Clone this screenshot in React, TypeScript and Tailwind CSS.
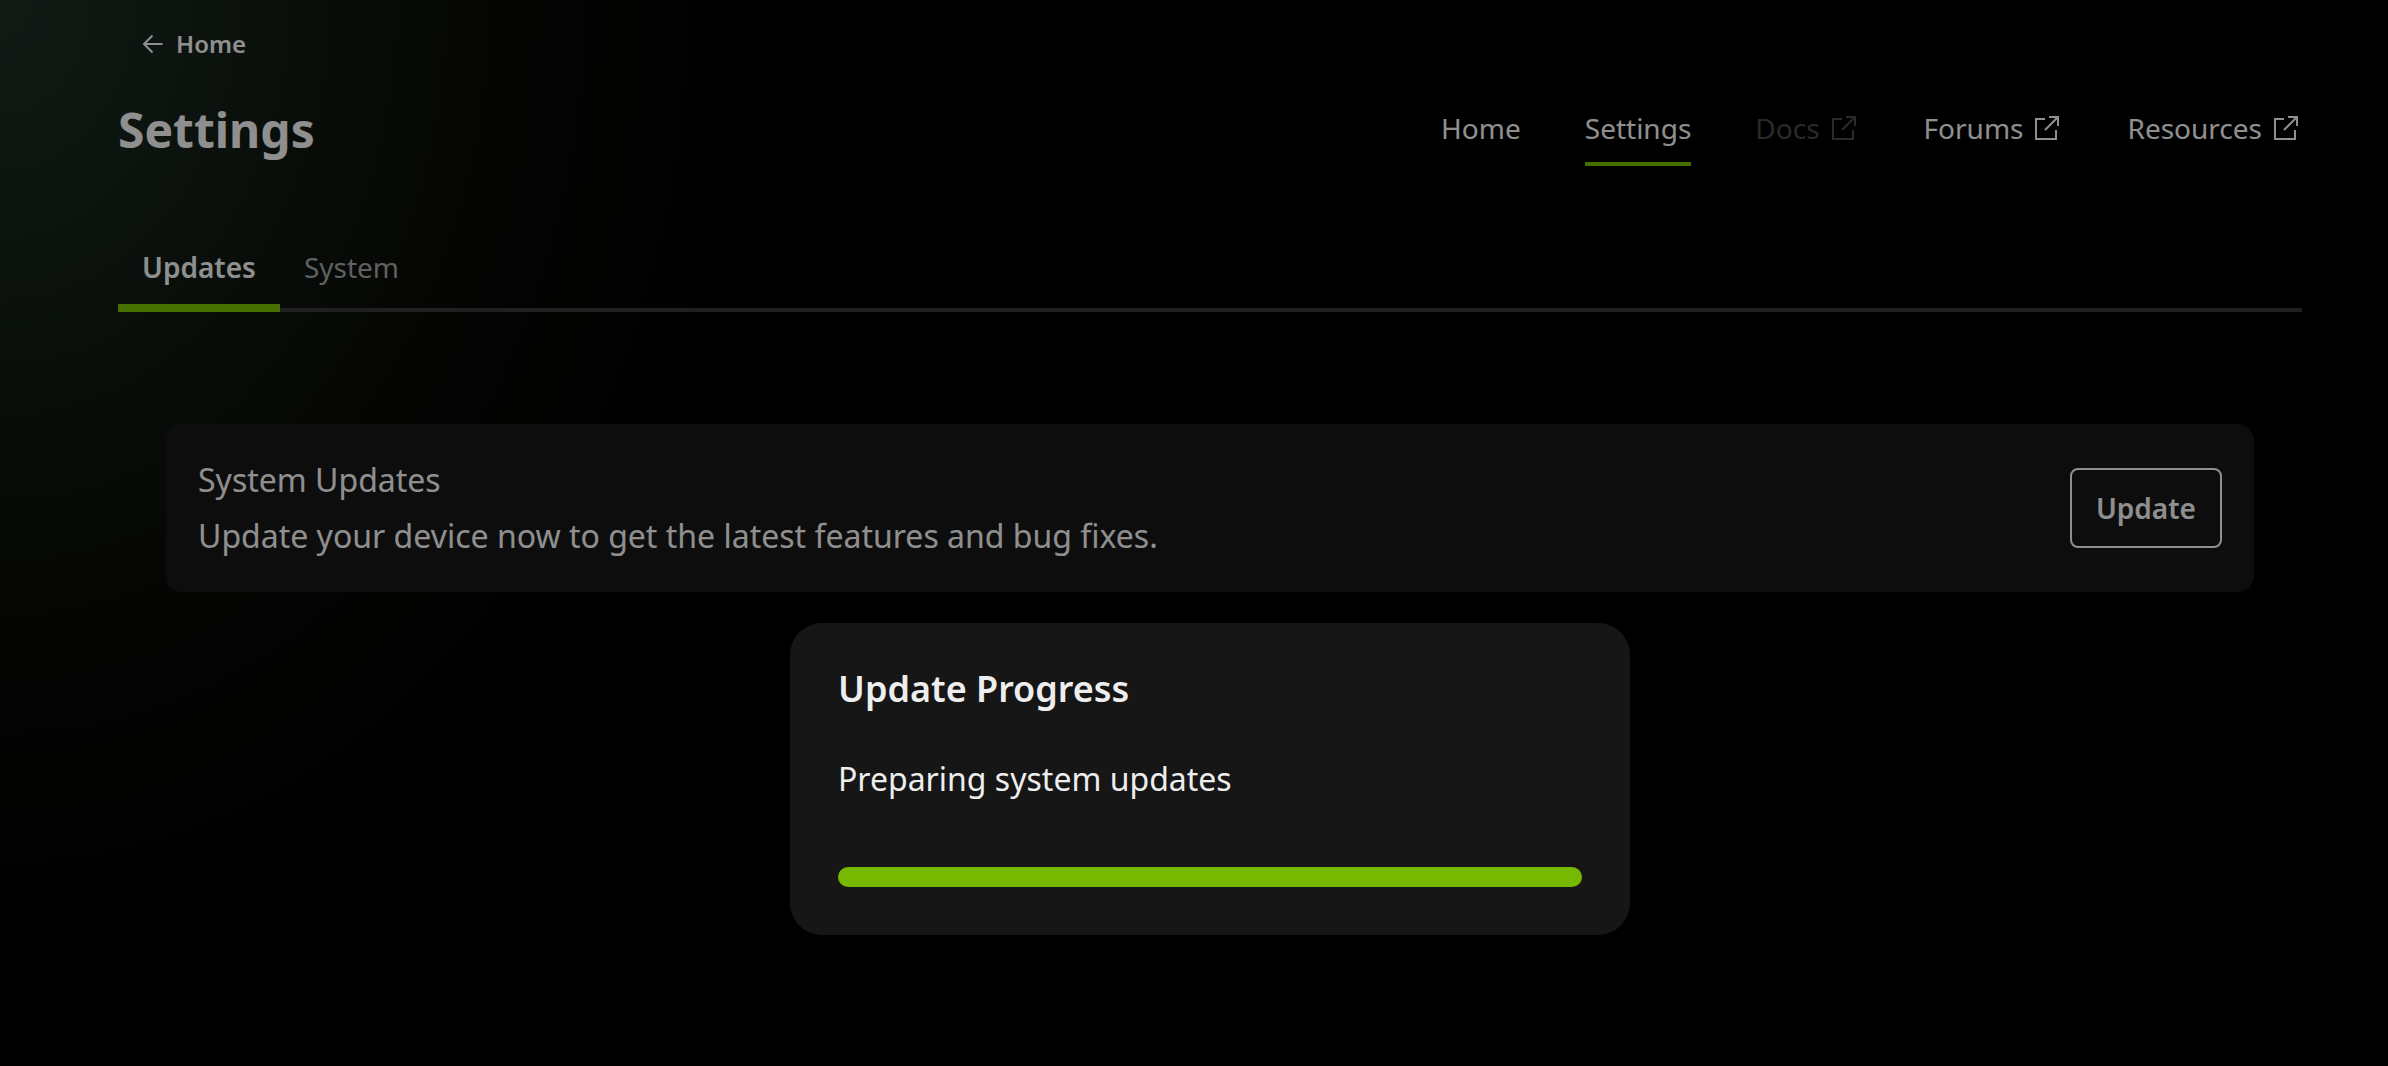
import { useState } from "react"

type NavItem = {
  label: string
  external?: boolean
  disabled?: boolean
}

const navItems: NavItem[] = [
  { label: "Home" },
  { label: "Settings" },
  { label: "Docs", external: true, disabled: true },
  { label: "Forums", external: true },
  { label: "Resources", external: true }
]

const tabs = ["Updates", "System"]

function ArrowLeftIcon() {
  return (
    <svg className="h-6 w-6" viewBox="0 0 24 24" fill="none" stroke="currentColor" strokeWidth={2} aria-hidden="true">
      <path d="M20.5 12H2M10.5 3.5L2 12l8.5 8.5" />
    </svg>
  )
}

function ExternalIcon() {
  return (
    <svg className="h-8 w-8" viewBox="0 0 32 32" fill="none" stroke="currentColor" strokeWidth={2} aria-hidden="true">
      <path d="M14 7H5v20h20v-9" />
      <path d="M18 5h9v9M14 18L27 5" />
    </svg>
  )
}

function NavLink({ item, active }: { item: NavItem; active: boolean }) {
  return (
    <a
      href="#"
      aria-current={active ? "page" : undefined}
      aria-disabled={item.disabled}
      className={`flex h-[76px] items-center gap-2 border-y-4 border-t-transparent text-[28px] leading-8 ${
        active ? "border-b-[#76b900]" : "border-b-transparent"
      } ${item.disabled ? "text-[#464646]" : "text-[#eeeeee]"}`}
    >
      {item.label}
      {item.external && <ExternalIcon />}
    </a>
  )
}

function UpdateDialog() {
  return (
    <div className="absolute inset-0 flex items-start justify-center bg-black/40 pt-[623px] pr-[86px] pl-[118px]">
      <div
        role="dialog"
        aria-modal="true"
        aria-labelledby="update-title"
        className="w-full max-w-[840px] rounded-[32px] bg-[#161616] p-12"
      >
        <h2 id="update-title" className="text-[36px] leading-9 font-semibold">Update Progress</h2>
        <label htmlFor="update-progress" className="mt-12 block text-[32px] leading-[48px]">
          Preparing system updates
        </label>
        <progress
          id="update-progress"
          value={100}
          max={100}
          className="mt-16 block h-5 w-full appearance-none overflow-hidden rounded-full [&::-webkit-progress-bar]:bg-[#393939] [&::-webkit-progress-value]:bg-[#76b900]"
        />
      </div>
    </div>
  )
}

export default function App() {
  const [activeTab, setActiveTab] = useState("Updates")

  return (
    <div className="relative min-h-screen bg-black bg-[radial-gradient(ellipse_780px_980px_at_0_0,#1f2d26_0%,#18241c_18%,#0f1711_40%,#080a06_65%,#000000_100%)] font-['Noto_Sans',sans-serif] text-[#eeeeee]">
      <div className="pr-[86px] pl-[118px]">
        <div className="flex px-6 pt-6">
          <a href="#" className="flex items-center gap-2.5 text-[24px] leading-10 font-semibold">
            <ArrowLeftIcon />
            Home
          </a>
        </div>

        <header className="mt-[26px] flex h-[76px] items-center justify-between">
          <h1 className="pt-1 text-[48px] leading-[72px] font-bold">Settings</h1>
          <nav className="flex gap-16">
            {navItems.map(item => (
              <NavLink key={item.label} item={item} active={item.label === "Settings"} />
            ))}
          </nav>
        </header>

        <div role="tablist" className="mt-14 flex h-[90px] border-b-4 border-[#363636]">
          {tabs.map(tab => (
            <button
              key={tab}
              type="button"
              role="tab"
              aria-selected={tab === activeTab}
              onClick={() => setActiveTab(tab)}
              className={`-mb-1 h-[90px] border-y-8 border-t-transparent px-6 text-[28px] leading-8 ${
                tab === activeTab
                  ? "border-b-[#76b900] font-semibold"
                  : "border-b-transparent text-[#a0a0a0]"
              }`}
            >
              {tab}
            </button>
          ))}
        </div>

        <main className="px-12 pt-28">
          <section className="flex items-center justify-between rounded-2xl bg-[#161616] p-8">
            <div className="flex flex-col gap-2 text-[32px] leading-[48px]">
              <h2>System Updates</h2>
              <p>Update your device now to get the latest features and bug fixes.</p>
            </div>
            <button
              type="button"
              className="h-20 rounded-lg border-2 border-[#eeeeee] px-6 text-[28px] leading-8 font-semibold"
            >
              Update
            </button>
          </section>
        </main>
      </div>

      <UpdateDialog />
    </div>
  )
}
